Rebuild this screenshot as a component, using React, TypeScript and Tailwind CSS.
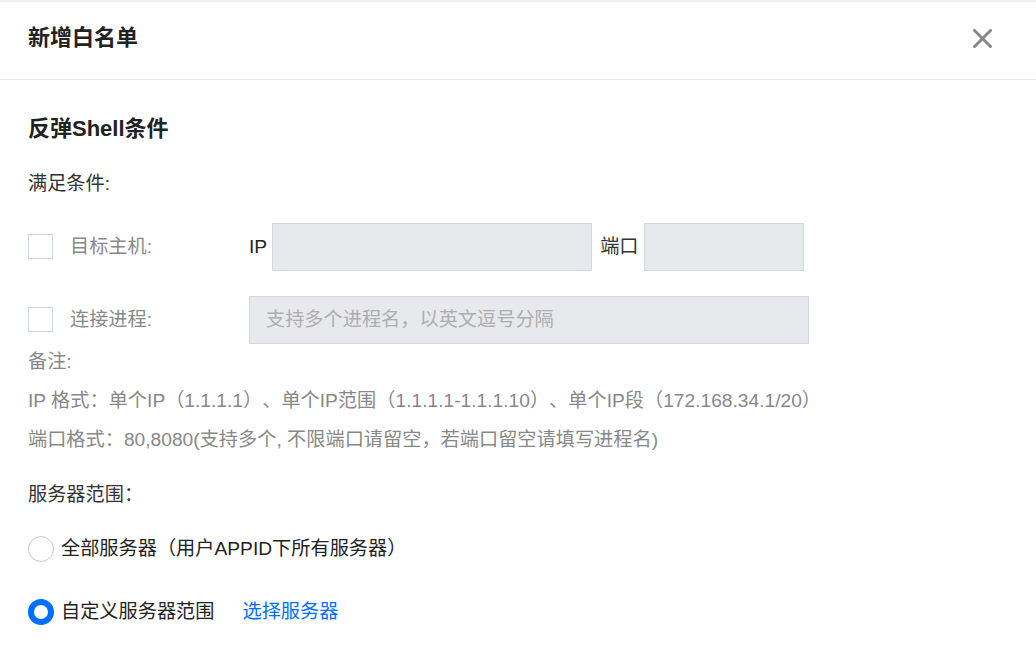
import React from "react";

const font = { fontFamily: '"Liberation Sans", "Noto Sans CJK SC", sans-serif' };

export default function App() {
  return (
    <div className="w-[1036px] h-[668px] bg-white overflow-hidden text-[#333] [text-spacing-trim:space-all]" style={font}>
      <div className="h-[2px] bg-[#f0f0f4]" />
      <div className="h-[78px] flex items-start justify-between pl-[28px] pr-[44px] pt-[21px] border-b border-[#e6e6e6]">
        <div className="text-[22px] leading-[30px] font-bold text-[#222]">新增白名单</div>
        <svg className="mt-[6px]" width="19" height="19" viewBox="0 0 19 19">
          <path d="M1.5 1.5 L17.5 17.5 M17.5 1.5 L1.5 17.5" stroke="#888" strokeWidth="3" strokeLinecap="square" />
        </svg>
      </div>

      <div className="pl-[28px] pt-[34px]">
        <div className="text-[22px] leading-[30px] font-bold text-[#222]">反弹Shell条件</div>
        <div className="mt-[25px] text-[19.2px] leading-[30px] text-[#333]">满足条件:</div>

        <div className="mt-[24px] flex items-center h-[48px]">
          <div className="w-[221px] flex items-center">
            <div className="w-[25px] h-[25px] border border-[#cfd5de] bg-white" />
            <span className="ml-[17px] text-[19.2px] text-[#888]">目标主机:</span>
          </div>
          <span className="text-[19.2px] text-[#222]">IP</span>
          <div className="ml-[5px] w-[320px] h-[48px] bg-[#e8e9ec] border border-[#d3d8df]" />
          <span className="ml-[8px] text-[19.2px] text-[#333]">端口</span>
          <div className="ml-[5px] w-[160px] h-[48px] bg-[#e8e9ec] border border-[#d3d8df]" />
        </div>

        <div className="mt-[25px] flex items-center h-[48px]">
          <div className="w-[221px] flex items-center">
            <div className="w-[25px] h-[25px] border border-[#cfd5de] bg-white" />
            <span className="ml-[17px] text-[19.2px] text-[#888]">连接进程:</span>
          </div>
          <div className="w-[560px] h-[48px] bg-[#e8e9ec] border border-[#d3d8df] flex items-center pl-[16px] text-[19.2px] text-[#adadad]">
            支持多个进程名，以英文逗号分隔
          </div>
        </div>

        <div className="mt-[3px] flex flex-col gap-[9px] text-[19.2px] leading-[30px] text-[#888]">
          <div>备注:</div>
          <div>IP 格式：单个IP（1.1.1.1）、单个IP范围（1.1.1.1-1.1.1.10）、单个IP段（172.168.34.1/20）</div>
          <div>端口格式：80,8080(支持多个, 不限端口请留空，若端口留空请填写进程名)</div>
        </div>

        <div className="mt-[25px] text-[19.2px] leading-[30px] text-[#333]">服务器范围：</div>

        <div className="mt-[24px] flex items-center h-[30px]">
          <div className="w-[26px] h-[26px] rounded-full border border-[#c8c8c8] bg-white" />
          <span className="ml-[7px] text-[19.2px] text-[#222]">全部服务器（用户APPID下所有服务器）</span>
        </div>

        <div className="mt-[33px] flex items-center h-[30px]">
          <div className="w-[26px] h-[26px] rounded-full border-[6px] border-[#006eff] bg-white" />
          <span className="ml-[7px] text-[19.2px] text-[#222]">自定义服务器范围</span>
          <span className="ml-[28px] text-[19.2px] text-[#006eff]">选择服务器</span>
        </div>
      </div>
    </div>
  );
}
